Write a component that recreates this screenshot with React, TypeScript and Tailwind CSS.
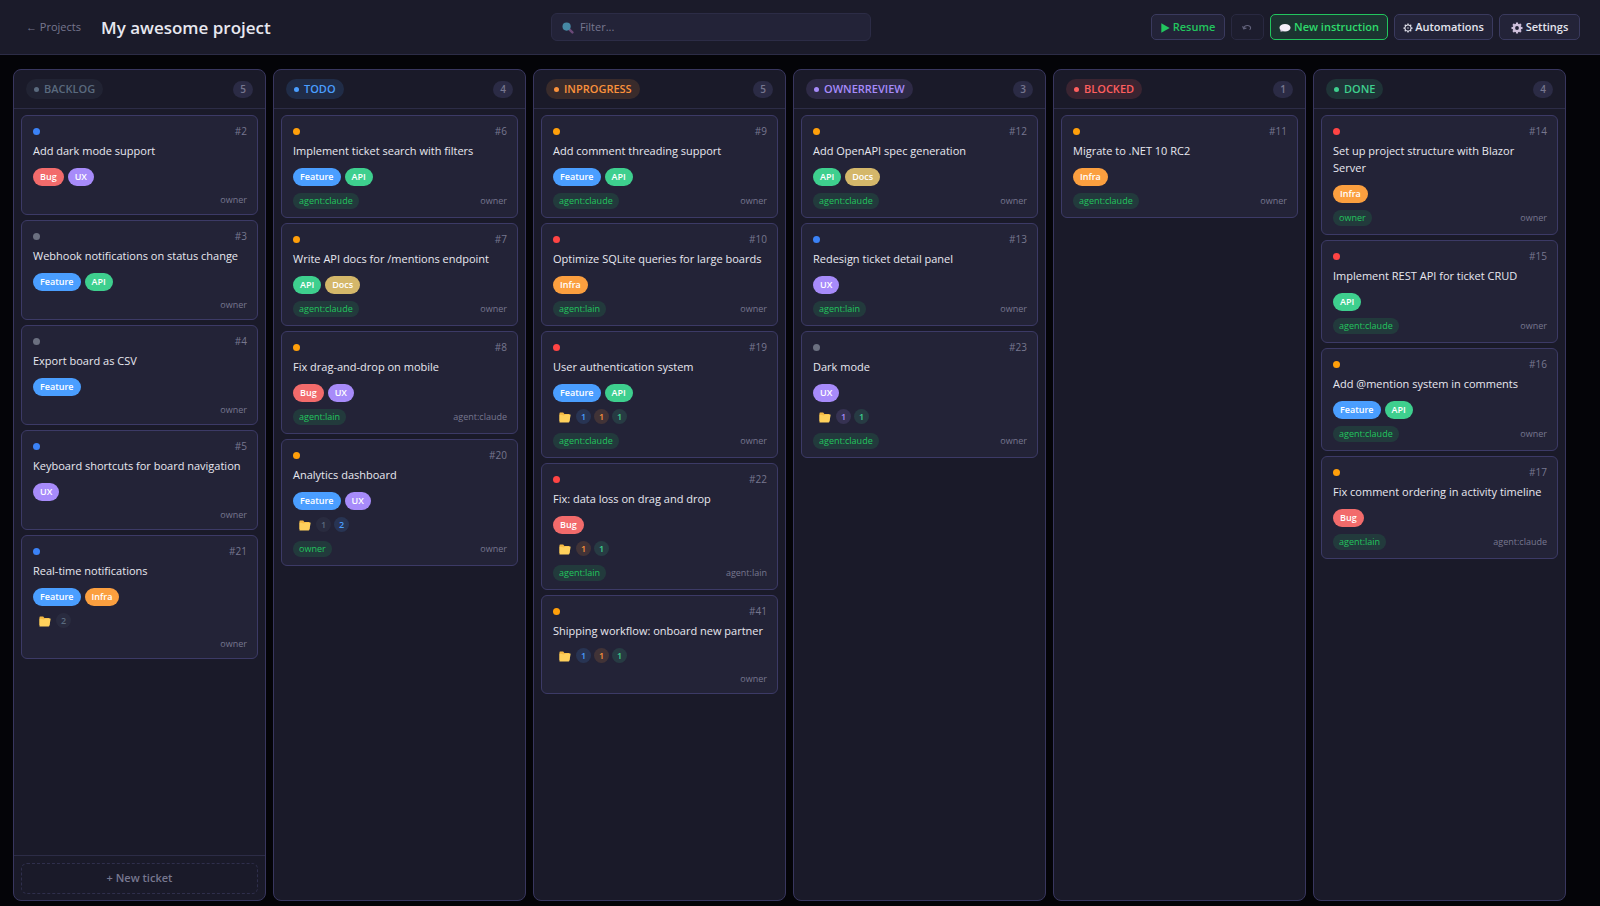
import clsx from "clsx";

type Status = "backlog" | "todo" | "inprogress" | "ownerreview" | "blocked" | "done";
type Label = "Bug" | "UX" | "Feature" | "API" | "Docs" | "Infra";
type Priority = "low" | "medium" | "high" | "critical";

interface Ticket {
  id: number;
  title: string;
  priority: Priority;
  labels: Label[];
  subtasks?: [Status, number][];
  assignee?: string;
  createdBy: string;
}

interface Column {
  status: Status;
  name: string;
  tickets: Ticket[];
}

const priorityColor: Record<Priority, string> = {
  low: "bg-[#6b7080]",
  medium: "bg-[#3b82f6]",
  high: "bg-[#ff9f0a]",
  critical: "bg-[#ff4444]",
};

const labelColor: Record<Label, string> = {
  Bug: "bg-[#f26b6b]",
  UX: "bg-[#a78bfa]",
  Feature: "bg-[#4a9eff]",
  API: "bg-[#3ecf8e]",
  Docs: "bg-[#d4b76a]",
  Infra: "bg-[#fb9f3f]",
};

const statusStyle: Record<Status, { pill: string; dot: string }> = {
  backlog: { pill: "bg-[#5a6a7e]/12 text-[#5a6a7e]", dot: "bg-[#5a6a7e]" },
  todo: { pill: "bg-[#4a9eff]/14 text-[#4a9eff]", dot: "bg-[#4a9eff]" },
  inprogress: { pill: "bg-[#fb923c]/14 text-[#fb923c]", dot: "bg-[#fb923c]" },
  ownerreview: { pill: "bg-[#a78bfa]/14 text-[#a78bfa]", dot: "bg-[#a78bfa]" },
  blocked: { pill: "bg-[#ff5f5f]/14 text-[#ff5f5f]", dot: "bg-[#ff5f5f]" },
  done: { pill: "bg-[#3ecf8e]/14 text-[#3ecf8e]", dot: "bg-[#3ecf8e]" },
};

const columns: Column[] = [
  {
    status: "backlog",
    name: "BACKLOG",
    tickets: [
      { id: 2, title: "Add dark mode support", priority: "medium", labels: ["Bug", "UX"], createdBy: "owner" },
      { id: 3, title: "Webhook notifications on status change", priority: "low", labels: ["Feature", "API"], createdBy: "owner" },
      { id: 4, title: "Export board as CSV", priority: "low", labels: ["Feature"], createdBy: "owner" },
      { id: 5, title: "Keyboard shortcuts for board navigation", priority: "medium", labels: ["UX"], createdBy: "owner" },
      { id: 21, title: "Real-time notifications", priority: "medium", labels: ["Feature", "Infra"], subtasks: [["backlog", 2]], createdBy: "owner" },
    ],
  },
  {
    status: "todo",
    name: "TODO",
    tickets: [
      { id: 6, title: "Implement ticket search with filters", priority: "high", labels: ["Feature", "API"], assignee: "agent:claude", createdBy: "owner" },
      { id: 7, title: "Write API docs for /mentions endpoint", priority: "high", labels: ["API", "Docs"], assignee: "agent:claude", createdBy: "owner" },
      { id: 8, title: "Fix drag-and-drop on mobile", priority: "high", labels: ["Bug", "UX"], assignee: "agent:lain", createdBy: "agent:claude" },
      { id: 20, title: "Analytics dashboard", priority: "high", labels: ["Feature", "UX"], subtasks: [["backlog", 1], ["todo", 2]], assignee: "owner", createdBy: "owner" },
    ],
  },
  {
    status: "inprogress",
    name: "INPROGRESS",
    tickets: [
      { id: 9, title: "Add comment threading support", priority: "high", labels: ["Feature", "API"], assignee: "agent:claude", createdBy: "owner" },
      { id: 10, title: "Optimize SQLite queries for large boards", priority: "critical", labels: ["Infra"], assignee: "agent:lain", createdBy: "owner" },
      { id: 19, title: "User authentication system", priority: "critical", labels: ["Feature", "API"], subtasks: [["todo", 1], ["inprogress", 1], ["done", 1]], assignee: "agent:claude", createdBy: "owner" },
      { id: 22, title: "Fix: data loss on drag and drop", priority: "critical", labels: ["Bug"], subtasks: [["inprogress", 1], ["done", 1]], assignee: "agent:lain", createdBy: "agent:lain" },
      { id: 41, title: "Shipping workflow: onboard new partner", priority: "high", labels: [], subtasks: [["todo", 1], ["inprogress", 1], ["done", 1]], createdBy: "owner" },
    ],
  },
  {
    status: "ownerreview",
    name: "OWNERREVIEW",
    tickets: [
      { id: 12, title: "Add OpenAPI spec generation", priority: "high", labels: ["API", "Docs"], assignee: "agent:claude", createdBy: "owner" },
      { id: 13, title: "Redesign ticket detail panel", priority: "medium", labels: ["UX"], assignee: "agent:lain", createdBy: "owner" },
      { id: 23, title: "Dark mode", priority: "low", labels: ["UX"], subtasks: [["ownerreview", 1], ["done", 1]], assignee: "agent:claude", createdBy: "owner" },
    ],
  },
  {
    status: "blocked",
    name: "BLOCKED",
    tickets: [
      { id: 11, title: "Migrate to .NET 10 RC2", priority: "high", labels: ["Infra"], assignee: "agent:claude", createdBy: "owner" },
    ],
  },
  {
    status: "done",
    name: "DONE",
    tickets: [
      { id: 14, title: "Set up project structure with Blazor Server", priority: "critical", labels: ["Infra"], assignee: "owner", createdBy: "owner" },
      { id: 15, title: "Implement REST API for ticket CRUD", priority: "critical", labels: ["API"], assignee: "agent:claude", createdBy: "owner" },
      { id: 16, title: "Add @mention system in comments", priority: "high", labels: ["Feature", "API"], assignee: "agent:claude", createdBy: "owner" },
      { id: 17, title: "Fix comment ordering in activity timeline", priority: "high", labels: ["Bug"], assignee: "agent:lain", createdBy: "agent:claude" },
    ],
  },
];

function FolderIcon() {
  return (
    <svg viewBox="0 0 12 11" className="w-3 h-[11px]" aria-hidden="true">
      <path d="M0.5 1.2Q0.5 0.5 1.2 0.5H4.2l1.2 1.4h4.4q.7 0 .7.7V9H0.5z" fill="#f5b942" />
      <path d="M0.5 10.5V2.6L5 3.4 6.2 2.6h5q.6 0 .4.7L10.4 9.8q-.2.7-.8.7z" fill="#ffd15c" />
    </svg>
  );
}

function SearchIcon() {
  return (
    <svg viewBox="0 0 12 12" className="w-3 h-3" aria-hidden="true">
      <path d="M7.8 7.8 10.4 10.4" stroke="#6b4a78" strokeWidth="2.4" strokeLinecap="round" />
      <circle cx="4.6" cy="4.6" r="4.1" fill="#4688a4" />
    </svg>
  );
}

function PlayIcon() {
  return (
    <svg viewBox="0 0 9 10" className="w-[9px] h-2.5" aria-hidden="true">
      <path d="M0.3 0.3 8.7 5 0.3 9.7z" fill="#22c55e" />
    </svg>
  );
}

function UndoIcon() {
  return (
    <svg viewBox="0 0 10 8" className="w-2.5 h-2" fill="none" stroke="#62627c" aria-hidden="true">
      <path d="M1.8 4C2.6 .8 8 .6 8.6 3.6Q8.8 5 7.6 5.8" strokeWidth="1.1" />
      <path d="M0.6 2.2 1.7 4.7 4.4 4.2" strokeWidth="1.2" />
    </svg>
  );
}

function SpeechIcon() {
  return (
    <svg viewBox="0 0 12 10" className="w-3 h-2.5" aria-hidden="true">
      <ellipse cx="6" cy="4.8" rx="5.5" ry="3.8" fill="#f3eef8" />
      <path d="M1.4 6 1.6 8.8 4.6 8z" fill="#d9cfe4" />
    </svg>
  );
}

const teeth = [0, 45, 90, 135, 180, 225, 270, 315];

function GearIcon({ solid }: { solid?: boolean }) {
  const color = solid ? "#cfc0dc" : "#e4e4ee";
  return (
    <svg
      viewBox="0 0 12 12"
      className={solid ? "w-3 h-3" : "w-2.5 h-2.5"}
      fill="none"
      stroke={color}
      aria-hidden="true"
    >
      {teeth.map((a) => (
        <path key={a} d="M6 2.4V0.5" strokeWidth={solid ? 2.2 : 1.5} transform={`rotate(${a} 6 6)`} />
      ))}
      <circle cx="6" cy="6" r={solid ? 3.1 : 3.7} strokeWidth={solid ? 2.4 : 1.3} />
      {!solid && <circle cx="6" cy="6" r="0.8" fill={color} stroke="none" />}
    </svg>
  );
}

const toolButton =
  "flex h-[26px] items-center justify-center rounded-[5px] border pt-px text-[11px] font-semibold";
const neutralButton = "border-[#3a3a5e] bg-[#232338]";

function Header() {
  return (
    <header className="flex h-[55px] shrink-0 items-center border-b border-[#2c2c46] bg-[#1b1b2a] pl-[26px] pr-5">
      <a href="#projects" className="pt-px text-[11px] text-[#77778f] hover:text-[#e4e4ee]">
        ← Projects
      </a>
      <h1 className="ml-5 pt-px text-[17px] font-semibold text-[#e8e8f0]">My awesome project</h1>

      <label className="mx-auto flex h-7 w-80 items-center gap-1.5 rounded-md border border-[#2c2c46] bg-[#232338] px-2.5 pt-px">
        <SearchIcon />
        <input
          type="text"
          aria-label="Filter tickets"
          placeholder="Filter..."
          className="min-w-0 flex-1 bg-transparent text-[11px] text-[#e4e4ee] outline-none placeholder:text-[#77778f]"
        />
      </label>

      <div className="flex items-center gap-1.5">
        <button className={clsx(toolButton, neutralButton, "w-[74px] gap-[3px] text-[#22c55e]")}>
          <PlayIcon />
          Resume
        </button>
        <button disabled aria-label="Undo" className={clsx(toolButton, "w-[33px] border-[#292941] bg-[#1d1d2e]")}>
          <UndoIcon />
        </button>
        <button className={clsx(toolButton, "w-[118px] gap-[3px] border-[#22c55e] bg-[#1c3431] text-[#2edb6c]")}>
          <SpeechIcon />
          New instruction
        </button>
        <button className={clsx(toolButton, neutralButton, "w-[99px] gap-0.5 text-[#e4e4ee]")}>
          <GearIcon />
          Automations
        </button>
        <button className={clsx(toolButton, neutralButton, "w-[81px] gap-[3px] text-[#e4e4ee]")}>
          <GearIcon solid />
          Settings
        </button>
      </div>
    </header>
  );
}

function TicketCard({ ticket }: { ticket: Ticket }) {
  return (
    <article className="rounded-md border border-[#3c3a66] bg-[#232337] py-2 pr-2.5 pl-[11px]">
      <div className="flex h-[15px] items-center justify-between">
        <span className={clsx("size-[7px] rounded-full", priorityColor[ticket.priority])} />
        <span className="text-[10px] text-[#77778f]">#{ticket.id}</span>
      </div>
      <h3 className="mt-[3px] mb-[9px] text-[11px] leading-[17px] font-medium text-[#e8e8f0]">{ticket.title}</h3>

      {ticket.labels.length > 0 && (
        <div className="mb-[7px] flex gap-1">
          {ticket.labels.map((label) => (
            <span
              key={label}
              className={clsx(
                "flex h-[18px] items-center rounded-full px-[7px] text-[9px] font-semibold text-white",
                labelColor[label],
              )}
            >
              {label}
            </span>
          ))}
        </div>
      )}

      {ticket.subtasks && (
        <div className="mb-[7px] flex h-[17px] items-start gap-[3px] pl-1.5">
          <span className="mr-0.5 pt-[3px]">
            <FolderIcon />
          </span>
          {ticket.subtasks.map(([status, count]) => (
            <span
              key={status}
              className={clsx(
                "flex size-[15px] items-center justify-center rounded-full text-[9px] font-semibold",
                statusStyle[status].pill,
              )}
            >
              {count}
            </span>
          ))}
        </div>
      )}

      <div className={clsx("flex items-center justify-between", ticket.assignee ? "h-4" : "h-[13px]")}>
        {ticket.assignee && (
          <span className="flex h-4 items-center rounded-full bg-[#22c55e]/15 px-1.5 text-[9px] font-medium text-[#22c55e]">
            {ticket.assignee}
          </span>
        )}
        <span className="ml-auto text-[9px] text-[#77778f]">{ticket.createdBy}</span>
      </div>
    </article>
  );
}

function BoardColumn({ column }: { column: Column }) {
  const style = statusStyle[column.status];
  return (
    <section className="flex min-w-0 flex-col rounded-lg border border-[#38365e] bg-[#1a1a29]">
      <div className="flex h-[39px] items-center justify-between border-b border-[#2c2c46] px-3">
        <h2 className={clsx("flex h-5 items-center gap-[5px] rounded-full px-2 text-[11px] font-semibold", style.pill)}>
          <span className={clsx("size-[5px] rounded-full", style.dot)} />
          {column.name}
        </h2>
        <span className="flex h-[17px] min-w-5 items-center justify-center rounded-full bg-[#2b2b45] text-[10px] font-semibold text-[#77778f]">
          {column.tickets.length}
        </span>
      </div>

      <div className="flex flex-1 flex-col gap-[5px] px-[7px] pt-1.5">
        {column.tickets.map((ticket) => (
          <TicketCard key={ticket.id} ticket={ticket} />
        ))}
      </div>

      {column.status === "backlog" && (
        <div className="border-t border-[#2c2c46] px-[7px] pt-[7px] pb-1.5">
          <button className="block h-[31px] w-full rounded-md border border-dashed border-[#2f2f4c] text-[11px] font-semibold text-[#77778f] hover:text-[#e4e4ee]">
            + New ticket
          </button>
        </div>
      )}
    </section>
  );
}

export default function App() {
  return (
    <div className="flex min-h-screen flex-col bg-[#040408] font-['Open_Sans','Noto_Sans',sans-serif]">
      <Header />
      <main className="grid flex-1 grid-cols-6 gap-[7px] pt-3.5 pr-[34px] pb-[5px] pl-[13px]">
        {columns.map((column) => (
          <BoardColumn key={column.status} column={column} />
        ))}
      </main>
    </div>
  );
}
